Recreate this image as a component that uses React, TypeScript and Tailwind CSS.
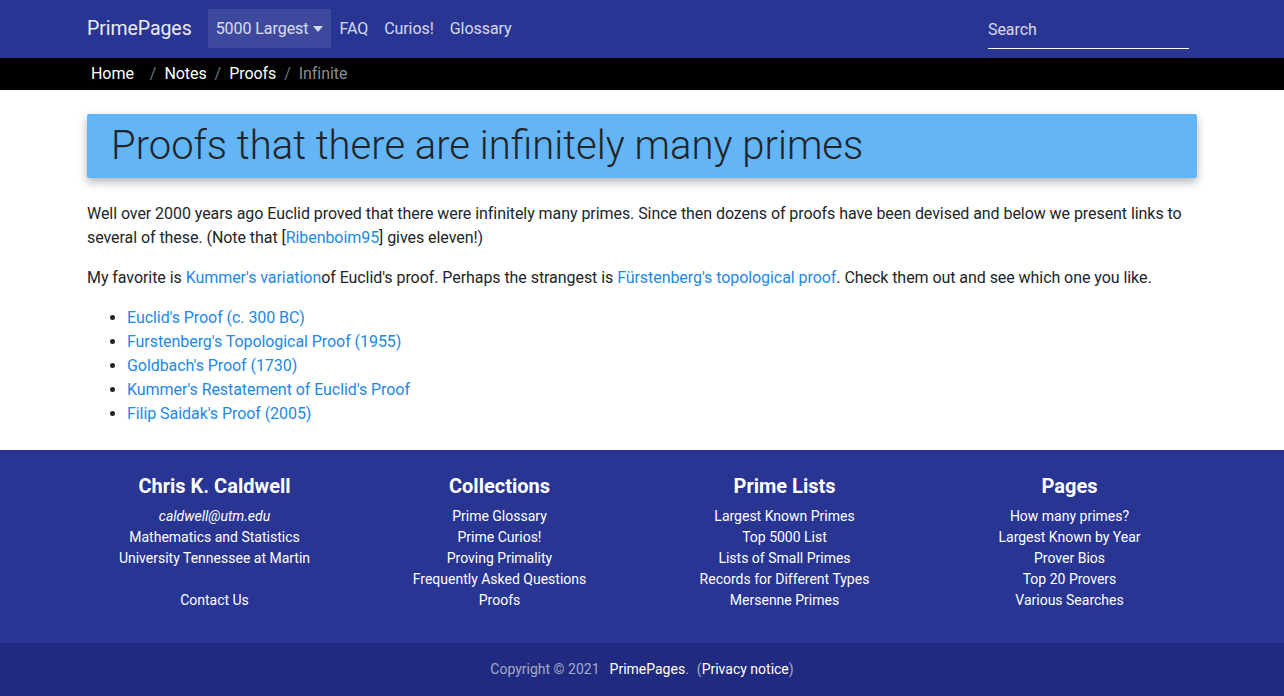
import React from "react";

const footerCols = [
  { title: "Collections", items: ["Prime Glossary", "Prime Curios!", "Proving Primality", "Frequently Asked Questions", "Proofs"] },
  { title: "Prime Lists", items: ["Largest Known Primes", "Top 5000 List", "Lists of Small Primes", "Records for Different Types", "Mersenne Primes"] },
  { title: "Pages", items: ["How many primes?", "Largest Known by Year", "Prover Bios", "Top 20 Provers", "Various Searches"] },
];

const proofs = [
  "Euclid's Proof (c. 300 BC)",
  "Furstenberg's Topological Proof (1955)",
  "Goldbach's Proof (1730)",
  "Kummer's Restatement of Euclid's Proof",
  "Filip Saidak's Proof (2005)",
];

export default function App() {
  return (
    <div className="min-h-[696px] bg-white text-[#212529] font-['Roboto',sans-serif] text-base leading-6 tracking-[-0.06px]">
      <nav className="h-[58px] bg-[#283593]">
        <div className="mx-auto w-[1140px] px-[15px] h-full flex items-center">
          <span className="text-[19.5px] text-white/90 mr-4">PrimePages</span>
          <div className="flex items-center h-[39px] px-2 bg-white/10 text-white/80 mt-[-1px]">
            5000 Largest
            <svg width="10" height="6" viewBox="0 0 10 6" className="ml-[5px]"><path d="M0 0h10L5 6z" fill="currentColor" /></svg>
          </div>
          <span className="ml-2 text-white/80">FAQ</span>
          <span className="ml-4 text-white/80">Curios!</span>
          <span className="ml-4 text-white/80">Glossary</span>
          <div className="ml-auto mr-2 w-[201px] border-b border-white pb-[6px] pt-[8px] text-white/80">Search</div>
        </div>
      </nav>
      <div className="h-8 bg-black">
        <div className="mx-auto w-[1140px] px-[19px] h-full flex items-center text-white">
          <span>Home</span>
          <span className="px-2 ml-2 text-[#6c757d]">/</span>
          <span>Notes</span>
          <span className="px-2 text-[#6c757d]">/</span>
          <span>Proofs</span>
          <span className="px-2 text-[#6c757d]">/</span>
          <span className="text-[#8a8f94]">Infinite</span>
        </div>
      </div>
      <main className="mx-auto w-[1140px] px-[15px] pt-6 pb-6">
        <div className="bg-[#64b5f6] rounded-[2px] shadow-[0_4px_10px_rgba(0,0,0,0.3)] px-6 h-16 flex items-center">
          <h1 className="text-[40px] font-light leading-[1.2] text-[#212529] tracking-normal">Proofs that there are infinitely many primes</h1>
        </div>
        <p className="mt-6 mb-4">
          Well over 2000 years ago Euclid proved that there were infinitely many primes. Since then dozens of proofs have been devised and below we present links to several of these. (Note that [<a className="text-[#1e88e5]">Ribenboim95</a>] gives eleven!)
        </p>
        <p className="mb-4">
          My favorite is <a className="text-[#1e88e5]">Kummer's variation</a>of Euclid's proof. Perhaps the strangest is <a className="text-[#1e88e5]">Fürstenberg's topological proof</a>. Check them out and see which one you like.
        </p>
        <ul className="list-disc pl-10">
          {proofs.map((p) => (
            <li key={p} className="text-[#212529]"><a className="text-[#1e88e5]">{p}</a></li>
          ))}
        </ul>
      </main>
      <footer className="bg-[#283593] text-white">
        <div className="mx-auto w-[1140px] grid grid-cols-4 pt-6 h-[193px] text-center text-sm leading-[21px] tracking-normal">
          <div className="px-[15px]">
            <h5 className="text-[20px] font-bold leading-6 mb-2">Chris K. Caldwell</h5>
            <div className="italic">caldwell@utm.edu</div>
            <div>Mathematics and Statistics</div>
            <div>University Tennessee at Martin</div>
            <div className="mt-[21px]">Contact Us</div>
          </div>
          {footerCols.map((c) => (
            <div key={c.title} className="px-[15px]">
              <h5 className="text-[20px] font-bold leading-6 mb-2">{c.title}</h5>
              {c.items.map((i) => (
                <div key={i}>{i}</div>
              ))}
            </div>
          ))}
        </div>
        <div className="bg-[#1f2a80] h-[53px] flex items-center justify-center text-sm pb-[1px] tracking-normal">
          <span className="text-white/60">Copyright © 2021</span>
          <span className="ml-[10px]">PrimePages</span>
          <span className="text-white/60">.</span>
          <span className="ml-[8px] text-white/60">(</span>
          <span>Privacy notice</span>
          <span className="text-white/60">)</span>
        </div>
      </footer>
    </div>
  );
}
